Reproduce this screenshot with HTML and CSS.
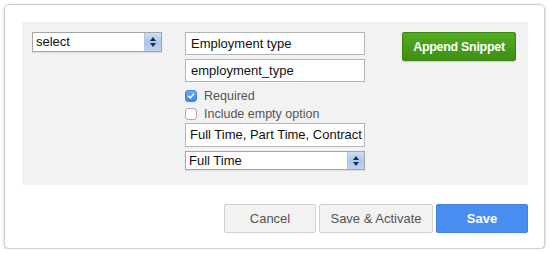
FILE: index.html
```html
<!DOCTYPE html>
<html>
<head>
<meta charset="utf-8">
<link rel="stylesheet" href="styles.css">
</head>
<body>
<div class="card">
  <div class="panel">
    <div class="col-left">
      <div class="select sel-type">
        <span class="sel-text">select</span>
        <span class="stepper"><span class="up"></span><span class="down"></span></span>
      </div>
    </div>
    <div class="col-mid">
      <div class="input in1">Employment type</div>
      <div class="input in2">employment_type</div>
      <label class="check"><span class="box checked"><svg viewBox="0 0 12 12" width="12" height="12"><path d="M3 6.3 L5.1 8.4 L9.2 3.6" fill="none" stroke="#fff" stroke-width="1.8" stroke-linecap="round" stroke-linejoin="round"/></svg></span><span class="check-label">Required</span></label>
      <label class="check check2"><span class="box"></span><span class="check-label">Include empty option</span></label>
      <div class="input in3">Full Time, Part Time, Contract</div>
      <div class="select sel-ft">
        <span class="sel-text">Full Time</span>
        <span class="stepper"><span class="up"></span><span class="down"></span></span>
      </div>
    </div>
    <div class="col-right">
      <button class="btn-append">Append Snippet</button>
    </div>
  </div>
  <div class="actions">
    <button class="btn btn-cancel">Cancel</button>
    <button class="btn btn-activate">Save &amp; Activate</button>
    <button class="btn btn-save">Save</button>
  </div>
</div>
</body>
</html>
```

FILE: styles.css
```css
html, body {
  margin: 0;
  padding: 0;
  background: #fff;
}
body {
  font-family: "Liberation Sans", Arial, Helvetica, sans-serif;
  font-size: 13px;
  color: #222;
}
.card {
  margin: 4px 0 0 4px;
  width: 541px;
  height: 245px;
  box-sizing: border-box;
  border: 1px solid #cfcfcf;
  border-radius: 5px;
  box-shadow: 0 1px 3px rgba(0,0,0,0.22);
  padding: 17px 16px 0 17px;
  background: #fff;
}
.panel {
  background: #f2f2f2;
  height: 163px;
  box-sizing: border-box;
  padding: 10px 12px 0 10px;
  display: flex;
  align-items: flex-start;
}
.col-left {
  width: 130px;
  margin-right: 23px;
}
.col-mid {
  width: 180px;
  display: flex;
  flex-direction: column;
}
.col-right {
  flex: 1;
  display: flex;
  justify-content: flex-end;
}
.select {
  position: relative;
  height: 20px;
  box-sizing: border-box;
  border: 1px solid #a6a6a6;
  background: #fff;
  display: flex;
  align-items: center;
  padding-left: 3px;
  font-size: 13px;
  color: #111;
  box-shadow: 0 1px 1px rgba(0,0,0,0.08);
}
.sel-text {
  flex: 1;
  line-height: 18px;
}
.stepper {
  width: 16px;
  height: 18px;
  border-left: 1px solid #b7c6da;
  background: linear-gradient(#cfe0f6, #a9c6ee 50%, #bcd3f2);
  display: flex;
  flex-direction: column;
  align-items: center;
  justify-content: center;
  gap: 2px;
}
.up {
  width: 0; height: 0;
  border-left: 3px solid transparent;
  border-right: 3px solid transparent;
  border-bottom: 4px solid #1f2a3a;
}
.down {
  width: 0; height: 0;
  border-left: 3px solid transparent;
  border-right: 3px solid transparent;
  border-top: 4px solid #1f2a3a;
}
.input {
  height: 23px;
  box-sizing: border-box;
  border: 1px solid #b5b5b5;
  background: #fff;
  padding: 0 5px;
  line-height: 21px;
  font-size: 13px;
  color: #111;
  white-space: nowrap;
  overflow: hidden;
}
.in2 { margin-top: 4px; }
.in3 { margin-top: 0; height: 24px; line-height: 22px; padding: 0 4px; }
.sel-ft { margin-top: 4px; height: 19px; }
.sel-ft .stepper { height: 17px; }
.check {
  display: flex;
  align-items: center;
  height: 19px;
  margin-top: 4px;
  color: #555;
  font-size: 12.5px;
}
.check2 { margin-top: 0; height: 18px; }
.box {
  width: 12px;
  height: 12px;
  box-sizing: border-box;
  border: 1px solid #aaa;
  border-radius: 3px;
  background: #fff;
  margin-right: 7px;
  display: flex;
  align-items: center;
  justify-content: center;
}
.box.checked {
  border-color: #3b86e8;
  background: linear-gradient(#6aaaf6, #3b86e8);
}
.box svg { display: block; }
.check-label { line-height: 16px; }
.btn-append {
  width: 114px;
  height: 29px;
  border: 1px solid #3a8414;
  border-radius: 2px;
  background: linear-gradient(#54ab22, #3f8f12);
  color: #fff;
  font-family: "Liberation Sans", Arial, sans-serif;
  font-weight: bold;
  font-size: 12.5px;
  letter-spacing: -0.3px;
  padding: 0;
  box-shadow: 0 1px 1px rgba(0,0,0,0.15);
}
.actions {
  display: flex;
  justify-content: flex-end;
  gap: 3px;
  margin-top: 19px;
}
.btn {
  height: 29px;
  border-radius: 2px;
  font-family: "Liberation Sans", Arial, sans-serif;
  font-size: 13px;
  padding: 0;
}
.btn-cancel, .btn-activate {
  background: #f2f2f2;
  border: 1px solid #d2d2d2;
  color: #555;
}
.btn-cancel { width: 92px; }
.btn-activate { width: 114px; }
.btn-save {
  width: 92px;
  background: #4a8df0;
  border: 1px solid #3f80e2;
  color: #fff;
  font-weight: bold;
}
```
